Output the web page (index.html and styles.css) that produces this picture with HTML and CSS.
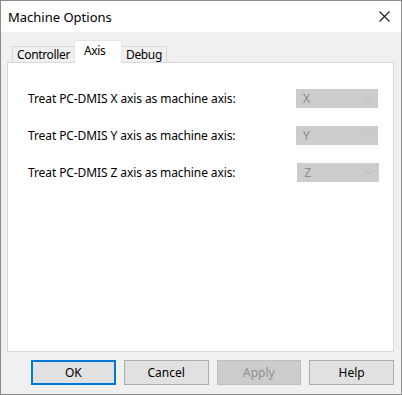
FILE: index.html
```html
<!DOCTYPE html>
<html lang="en">
<head>
  <meta charset="UTF-8" />
  <title>Machine Options</title>
  <link rel="stylesheet" href="styles.css">
</head>
<body>
  <div class="window">
    <div class="titlebar">
      <span class="title">Machine Options</span>
      <svg class="close" width="11" height="11" viewBox="0 0 11 11">
        <path d="M0.5 0.5 L10.5 10.5 M10.5 0.5 L0.5 10.5" stroke="#1a1a1a" stroke-width="1.1" fill="none"/>
      </svg>
    </div>

    <div class="client">
      <!-- tab strip -->
      <div class="tabs">
        <div class="tab tab-controller">Controller</div>
        <div class="tab tab-axis active">Axis</div>
        <div class="tab tab-debug">Debug</div>
      </div>

      <div class="panel">
        <div class="row">
          <span class="label">Treat PC-DMIS X axis as machine axis:</span>
          <div class="combo"><span>X</span><svg width="8" height="5" viewBox="0 0 8 5"><path d="M0.5 0.5 L4 4 L7.5 0.5" stroke="#b8b8b8" fill="none"/></svg></div>
        </div>
        <div class="row">
          <span class="label">Treat PC-DMIS Y axis as machine axis:</span>
          <div class="combo"><span>Y</span><svg width="8" height="5" viewBox="0 0 8 5"><path d="M0.5 0.5 L4 4 L7.5 0.5" stroke="#b8b8b8" fill="none"/></svg></div>
        </div>
        <div class="row">
          <span class="label">Treat PC-DMIS Z axis as machine axis:</span>
          <div class="combo shifted"><span>Z</span><svg width="8" height="5" viewBox="0 0 8 5"><path d="M0.5 0.5 L4 4 L7.5 0.5" stroke="#b8b8b8" fill="none"/></svg></div>
        </div>
      </div>

      <div class="buttons">
        <button class="btn default">OK</button>
        <button class="btn">Cancel</button>
        <button class="btn disabled">Apply</button>
        <button class="btn">Help</button>
      </div>
    </div>
  </div>
</body>
</html>
```

FILE: styles.css
```css
body {
  margin: 0;
  font-family: "Noto Sans", "Open Sans", sans-serif;
  font-size: 12px;
  letter-spacing: -0.1px;
  color: #000;
  background: #fff;
}

.window {
  width: 402px;
  height: 395px;
  box-sizing: border-box;
  border: 1px solid #8c8c8c;
  display: flex;
  flex-direction: column;
}

.titlebar {
  height: 31px;
  flex: none;
  background: #fff;
  display: flex;
  align-items: center;
  justify-content: space-between;
  padding: 0 11px 0 7px;
}

.title {
  font-size: 13px;
  color: #000;
  letter-spacing: 0;
}

.client {
  flex: 1;
  background: #f0f0f0;
  padding: 7px 7px 0 6px;
}

.tabs {
  display: flex;
  align-items: flex-end;
  height: 23px;
  padding-left: 5px;
}

.tab {
  height: 16px;
  line-height: 15px;
  padding-left: 4px;
  border: 1px solid #d9d9d9;
  border-bottom: none;
  background: #f0f0f0;
  box-sizing: border-box;
  letter-spacing: -0.35px;
  white-space: nowrap;
}

.tab-controller {
  width: 62px;
  border-right: none;
}

.tab-debug {
  width: 45px;
  border-left: none;
}

.tab.active {
  width: 48px;
  height: 23px;
  line-height: 20px;
  background: #fff;
  padding-left: 9px;
  border-color: #e6e6e6;
  position: relative;
  top: 1px;
}

.panel {
  height: 290px;
  box-sizing: border-box;
  background: #fff;
  border: 1px solid #d9d9d9;
  padding: 26px 14px 0 20px;
  display: flex;
  flex-direction: column;
  gap: 18px;
}

.row {
  display: flex;
  align-items: center;
  height: 19px;
}

.label {
  width: 268px;
}

.combo {
  width: 82px;
  height: 19px;
  box-sizing: border-box;
  background: #cccccc;
  color: #8a8a8a;
  display: flex;
  align-items: center;
  justify-content: space-between;
  padding: 0 6px 0 7px;
}

.combo.shifted {
  margin-left: 2px;
}

.buttons {
  display: flex;
  gap: 8px;
  padding: 8px 0 0 24px;
}

.btn {
  width: 85px;
  height: 25px;
  font-family: inherit;
  font-size: 12px;
  background: #e1e1e1;
  border: 1px solid #adadad;
  color: #000;
  padding: 0;
}

.btn.default {
  border: 2px solid #0078d7;
}

.btn.disabled {
  background: #cccccc;
  border-color: #bfbfbf;
  color: #8f8f8f;
}
```
